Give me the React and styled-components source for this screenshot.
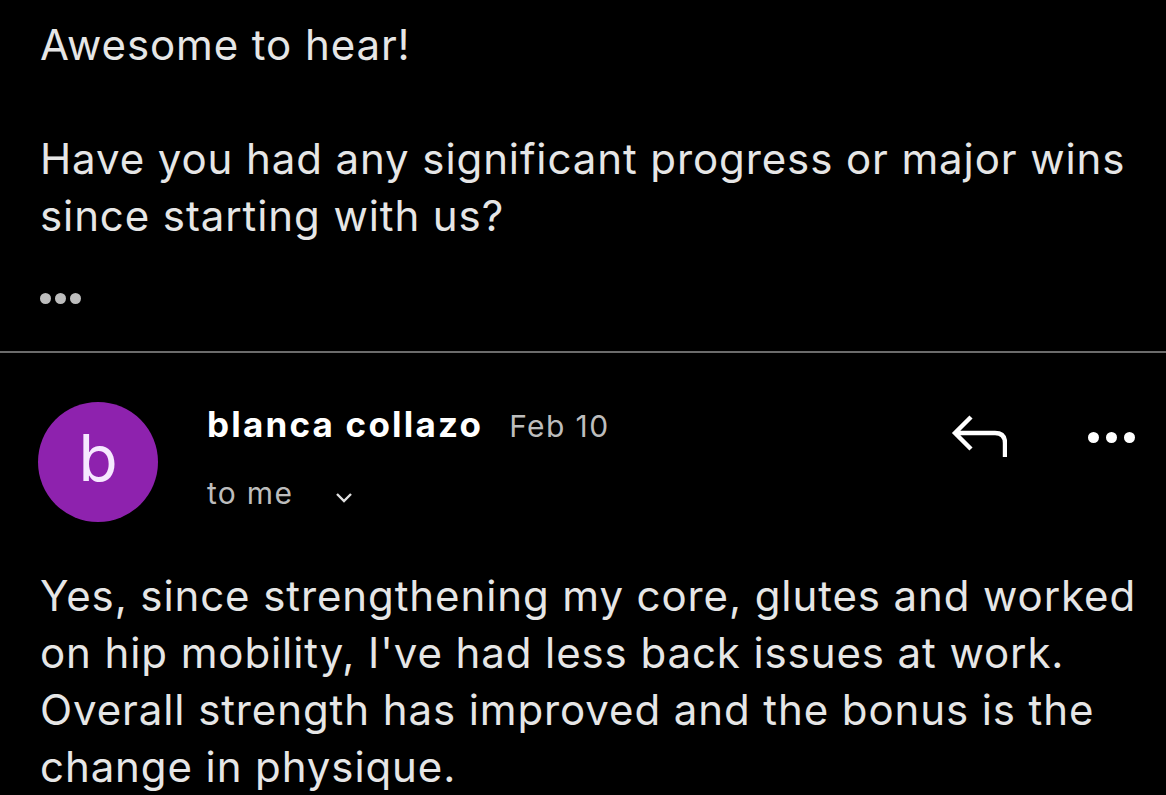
import React from "react";
import styled, { createGlobalStyle } from "styled-components";

const Global = createGlobalStyle`
  html, body { margin: 0; padding: 0; background: #000; }
  body {
    font-family: Inter, "Noto Sans", sans-serif;
    -webkit-font-smoothing: antialiased;
    height: 795px;
    overflow: hidden;
  }
`;

const Page = styled.div`
  width: 1166px;
  background: #000;
  display: flex;
  flex-direction: column;
  & > * { flex-shrink: 0; }
`;

const Quoted = styled.section`
  padding: 16px 40px 0 40px;
  display: flex;
  flex-direction: column;
`;

const BodyText = styled.p`
  margin: 0;
  color: #e6e6e6;
  font-size: 42px;
  line-height: 57px;
  font-weight: 400;
  letter-spacing: 0.9px;
  white-space: nowrap;
`;

const Gap = styled.div`
  height: ${(p) => p.h}px;
`;

const Dots = styled.div`
  display: flex;
  gap: ${(p) => p.gap}px;
  align-items: center;
`;

const MoreDots = styled(Dots)`
  margin-top: 49px;
  height: 10px;
`;

const Dot = styled.span`
  width: ${(p) => p.size}px;
  height: ${(p) => p.size}px;
  border-radius: 50%;
  background: ${(p) => p.color};
`;

const Divider = styled.hr`
  margin: 48px 0 0 0;
  border: none;
  height: 2px;
  background: #6b6b6b;
`;

const Header = styled.header`
  display: flex;
  align-items: flex-start;
  padding: 49px 31px 0 38px;
`;

const Avatar = styled.div`
  width: 120px;
  height: 120px;
  border-radius: 50%;
  background: #8e22ae;
  color: #f6e9ff;
  display: flex;
  align-items: center;
  justify-content: center;
  font-size: 64px;
  line-height: 1;
  flex-shrink: 0;
  padding-bottom: 8px;
  box-sizing: border-box;
`;

const Meta = styled.div`
  flex: 1;
  display: flex;
  flex-direction: column;
  margin-left: 49px;
  padding-top: 1px;
`;

const NameRow = styled.div`
  display: flex;
  align-items: baseline;
  gap: 26px;
`;

const Name = styled.span`
  color: #fff;
  font-size: 35px;
  font-weight: 700;
  letter-spacing: 2.2px;
`;

const DateText = styled.span`
  color: #bdbdbd;
  font-size: 30px;
  letter-spacing: 1.4px;
`;

const ToRow = styled.div`
  display: flex;
  align-items: center;
  gap: 42px;
  margin-top: 30px;
  color: #bdbdbd;
  font-size: 30px;
  letter-spacing: 1.3px;
`;

const ChevronWrap = styled.span`
  display: flex;
  margin-top: 8px;
`;

const Actions = styled.div`
  display: flex;
  align-items: center;
  gap: 81px;
  margin-top: 13px;
`;

const Message = styled.section`
  padding: 45px 40px 0 40px;
`;

function ReplyIcon() {
  return (
    <svg width="56" height="44" viewBox="0 0 56 44" fill="none">
      <path
        d="M20 2 L4 18 L20 34 M4 18 H44 Q54 18 54 28 V42"
        stroke="#fff"
        strokeWidth="4.4"
        strokeLinecap="butt"
        strokeLinejoin="miter"
      />
    </svg>
  );
}

function Chevron() {
  return (
    <svg width="18" height="11" viewBox="0 0 18 11" fill="none">
      <path d="M2 2 L9 9 L16 2" stroke="#e0e0e0" strokeWidth="2.4" />
    </svg>
  );
}

export default function App() {
  return (
    <Page>
      <Global />
      <Quoted>
        <BodyText>Awesome to hear!</BodyText>
        <Gap h={57} />
        <BodyText>
          Have you had any significant progress or major wins
          <br />
          since starting with us?
        </BodyText>
        <MoreDots gap={4}>
          <Dot size={11} color="#bdbdbd" />
          <Dot size={11} color="#bdbdbd" />
          <Dot size={11} color="#bdbdbd" />
        </MoreDots>
      </Quoted>
      <Divider />
      <Header>
        <Avatar>b</Avatar>
        <Meta>
          <NameRow>
            <Name>blanca collazo</Name>
            <DateText>Feb 10</DateText>
          </NameRow>
          <ToRow>
            <span>to me</span>
            <ChevronWrap>
              <Chevron />
            </ChevronWrap>
          </ToRow>
        </Meta>
        <Actions>
          <ReplyIcon />
          <Dots gap={7}>
            <Dot size={11} color="#fff" />
            <Dot size={11} color="#fff" />
            <Dot size={11} color="#fff" />
          </Dots>
        </Actions>
      </Header>
      <Message>
        <BodyText>
          Yes, since strengthening my core, glutes and worked
          <br />
          on hip mobility, I've had less back issues at work.
          <br />
          Overall strength has improved and the bonus is the
          <br />
          change in physique.
        </BodyText>
      </Message>
    </Page>
  );
}
